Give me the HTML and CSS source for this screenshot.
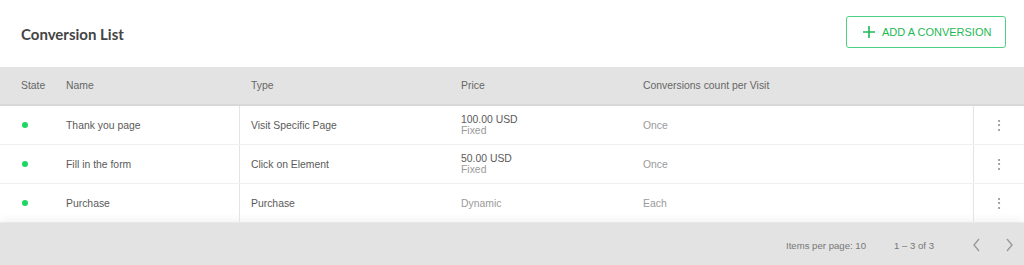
FILE: index.html
```html
<!DOCTYPE html>
<html lang="en">
<head>
  <meta charset="UTF-8">
  <title>Conversion List</title>
  <link rel="stylesheet" href="styles.css">
</head>
<body>
  <div class="top-bar">
    <h1>Conversion List</h1>
    <button class="add-button">
      <svg width="12" height="12" viewBox="0 0 12 12"><path d="M6 0v12M0 6h12" stroke="#1db954" stroke-width="1.6"/></svg>
      ADD A CONVERSION
    </button>
  </div>

  <div class="table">
    <div class="row head">
      <div class="cell state">State</div>
      <div class="cell name">Name</div>
      <div class="cell type">Type</div>
      <div class="cell price">Price</div>
      <div class="cell count">Conversions count per Visit</div>
      <div class="cell actions"></div>
    </div>

    <div class="row">
      <div class="cell state"><span class="dot"></span></div>
      <div class="cell name">Thank you page</div>
      <div class="cell type">Visit Specific Page</div>
      <div class="cell price"><span>100.00 USD</span><span class="muted">Fixed</span></div>
      <div class="cell count muted">Once</div>
      <div class="cell actions"><span class="more">⋮</span></div>
    </div>

    <div class="row">
      <div class="cell state"><span class="dot"></span></div>
      <div class="cell name">Fill in the form</div>
      <div class="cell type">Click on Element</div>
      <div class="cell price"><span>50.00 USD</span><span class="muted">Fixed</span></div>
      <div class="cell count muted">Once</div>
      <div class="cell actions"><span class="more">⋮</span></div>
    </div>

    <div class="row">
      <div class="cell state"><span class="dot"></span></div>
      <div class="cell name">Purchase</div>
      <div class="cell type">Purchase</div>
      <div class="cell price muted">Dynamic</div>
      <div class="cell count muted">Each</div>
      <div class="cell actions"><span class="more">⋮</span></div>
    </div>
  </div>

  <footer>
    <span class="per-page">Items per page: 10</span>
    <span class="range">1 – 3 of 3</span>
    <span class="pager">
      <svg width="10" height="14" viewBox="0 0 10 14"><path d="M7 1L2 7l5 6" fill="none" stroke="#9a9a9a" stroke-width="1.4"/></svg>
      <svg width="10" height="14" viewBox="0 0 10 14"><path d="M3 1l5 6-5 6" fill="none" stroke="#9a9a9a" stroke-width="1.4"/></svg>
    </span>
  </footer>
</body>
</html>
```

FILE: styles.css
```css
body {
  margin: 0;
  font-family: "Liberation Sans", Arial, sans-serif;
  font-size: 10.4px;
  color: #5a5a5a;
  background: #fff;
}

.top-bar {
  height: 67px;
  display: flex;
  align-items: center;
  justify-content: space-between;
  padding: 0 18px 0 21px;
}

h1 {
  margin: 0;
  font-family: Lato, sans-serif;
  font-weight: 700;
  font-size: 15px;
  color: #444;
}

.add-button {
  display: flex;
  align-items: center;
  gap: 7px;
  height: 32px;
  width: 160px;
  padding: 0 0 0 16px;
  margin-top: -3px;
  background: #fff;
  border: 1px solid #4cd184;
  border-radius: 3px;
  color: #1db954;
  font-family: "Liberation Sans", Arial, sans-serif;
  font-size: 11px;
  cursor: pointer;
}

.row {
  display: grid;
  grid-template-columns: 66px 173px 211px 182px 341px 1fr;
  height: 38px;
  border-bottom: 1px solid #f0f0f0;
}

.row.head {
  height: 37px;
  background: #e3e3e3;
  border-bottom: 2px solid #d8d8d8;
  color: #666;
}

.cell {
  display: flex;
  flex-direction: column;
  justify-content: center;
}

.state {
  padding-left: 21px;
}

.type,
.price,
.count {
  padding-left: 11px;
}

.type {
  border-left: 1px solid #e4e4e4;
}

.actions {
  border-left: 1px solid #e4e4e4;
  align-items: center;
}

.muted {
  color: #9a9a9a;
}

.dot {
  width: 6px;
  height: 6px;
  margin-left: 1px;
  border-radius: 50%;
  background: #1ed760;
}

.more {
  font-size: 12px;
  color: #777;
}

footer {
  height: 44px;
  background: #e3e3e3;
  box-shadow: 0 -5px 8px rgba(0, 0, 0, 0.04);
  display: flex;
  align-items: center;
  justify-content: flex-end;
  padding-right: 10px;
  font-size: 9.6px;
  color: #777;
}

.range {
  margin-left: 28px;
}

.pager {
  display: flex;
  gap: 22px;
  margin-left: 38px;
}
```
